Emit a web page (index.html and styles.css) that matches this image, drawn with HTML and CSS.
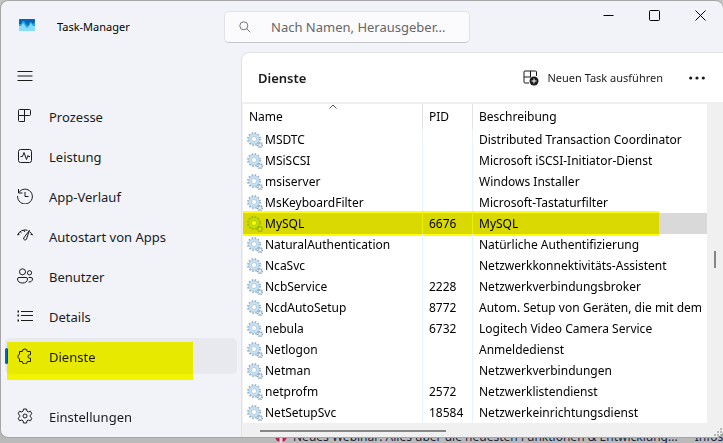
FILE: index.html
```html
<!DOCTYPE html>
<html lang="de">
  <head>
    <meta charset="utf-8">
    <title>Task-Manager</title>
    <link rel="stylesheet" href="styles.css">
  </head>
  <body>
    <!-- shared icons -->
    <svg class="sprite" width="0" height="0">
      <symbol id="service" viewBox="0 0 16 16">
        <circle cx="7" cy="7" r="6" fill="none" stroke="#9db3c6" stroke-width="2" stroke-dasharray="1.6 1.54" />
        <circle cx="7" cy="7" r="4" fill="none" stroke="#c6e3f5" stroke-width="2.6" />
        <circle cx="7" cy="7" r="5.2" fill="none" stroke="#98b8d0" stroke-width=".5" />
        <circle cx="7" cy="7" r="2.600" fill="#fff" stroke="#8badc8" stroke-width=".6" />
        <circle cx="13" cy="13" r="2.4" fill="none" stroke="#8ea6b8" stroke-width="1.6" stroke-dasharray="1.1 .78" />
        <circle cx="13" cy="13" r="1.5" fill="#fff" stroke="#a9c6da" stroke-width="1.1" />
      </symbol>
    </svg>

    <div class="window">
      <header class="titlebar">
        <svg class="logo" width="16" height="12" viewBox="0 0 16 12">
          <rect width="16" height="12" rx=".6" fill="#0863b4" />
          <path d="M0 5h2l2-3 1 0 2 3 2 2 2-4h1l2 2 2-2v9H0z" fill="#25a5e8" />
          <path d="M0 7h2l2-3 1 1 2 3 1 1 2-2 2-3 1 2 1 1h2v5H0z" fill="#86dcff" />
        </svg>
        <span class="app-name">Task-Manager</span>
        <label class="search">
          <svg width="12" height="12" viewBox="0 0 12 12"><circle cx="4.8" cy="4.8" r="4" /><path d="M7.8 7.8l3.5 3.5" /></svg>
          <input type="text" aria-label="Suchen" placeholder="Nach Namen, Herausgeber...">
        </label>
        <div class="controls">
          <button aria-label="Minimieren"><svg width="11" height="11" viewBox="0 0 11 11"><path d="M.5 5.5h10" /></svg></button>
          <button aria-label="Maximieren"><svg width="11" height="11" viewBox="0 0 11 11"><rect x=".5" y=".5" width="10" height="10" rx="1" /></svg></button>
          <button aria-label="Schließen"><svg width="11" height="11" viewBox="0 0 11 11"><path d="M.5.5l10 10M10.5.5l-10 10" /></svg></button>
        </div>
      </header>

      <nav class="sidebar">
        <button class="nav-item" aria-label="Navigation">
          <svg viewBox="0 0 16 16"><path d="M.5 3.500h15M.5 8h15M.5 12.500h15" /></svg>
        </button>
        <button class="nav-item">
          <svg viewBox="0 0 16 16"><path d="M2.500 1.500h10a1 1 0 0 1 1 1v4a1 1 0 0 1-1 1h-11v-5a1 1 0 0 1 1-1zM1.500 7.500v5a1 1 0 0 0 1 1h5v-12" /></svg>
          <span>Prozesse</span>
        </button>
        <button class="nav-item">
          <svg viewBox="0 0 16 16"><rect x="1.500" y="1.500" width="13" height="13" rx="2" /><path d="M3.500 8.500h2l1.500-4 2.500 7 1.500-4 .5 1h1.500" /></svg>
          <span>Leistung</span>
        </button>
        <button class="nav-item">
          <svg viewBox="0 0 16 16"><path d="M1.500 1v4h4M1.600 4.800A7.400 7.400 0 1 1 .6 8M8 4v4.500h3.500" /></svg>
          <span>App-Verlauf</span>
        </button>
        <button class="nav-item">
          <svg viewBox="0 0 16 16"><path d="M.6 7A8 8 0 0 1 10.500 2.300M.6 7l2-.9M13 4a8 8 0 0 1 2.500 3l-2-.9M3 3.500l1.500 1.300M6.800 2l.8 2M12.500 2.300 9.500 11a1.400 1.400 0 0 1-2.800-1l5.800-7.700z" /></svg>
          <span>Autostart von Apps</span>
        </button>
        <button class="nav-item">
          <svg viewBox="0 0 16 16"><circle cx="5.500" cy="3.800" r="3" /><circle cx="12.500" cy="4.800" r="2.100" /><path d="M2 9.500h7a1.500 1.500 0 0 1 1.500 1.500c0 2.500-2 4-5 4s-5-1.500-5-4A1.500 1.500 0 0 1 2 9.500zM11.500 9.500h2.500a1.500 1.500 0 0 1 1.500 1.500c0 2-1.500 3-4 3" /></svg>
          <span>Benutzer</span>
        </button>
        <button class="nav-item">
          <svg viewBox="0 0 16 16"><path d="M4 3.500h12M4 7.500h12M4 12.500h12" /><path d="M.5 3.500H2M.5 7.500H2M.5 12.500H2" stroke-width="1.800" /></svg>
          <span>Details</span>
        </button>
        <button class="nav-item active">
          <svg viewBox="0 0 16 16"><path d="M2.500 3.500h2.800a2.500 2.500 0 0 1 5 0h3.200v3.300h-.8a1.700 1.700 0 0 0 0 3.400h.8v3.300h-3.200a2.500 2.500 0 0 1-5 0H2.500v-2.800a2.300 2.300 0 0 1 0-4.400z" stroke-linejoin="round" /></svg>
          <span>Dienste</span>
        </button>
        <button class="nav-item settings">
          <svg viewBox="0 0 16 16"><circle cx="8" cy="8" r="2" /><path d="M6.500 1h3l.5 2.200 1.300.8 2.200-.8 1.400 2.600L13.200 7.300v1.400l1.700 1.500-1.400 2.600-2.200-.8-1.300.8-.5 2.200h-3L6 12.800 4.700 12l-2.200.8-1.400-2.600 1.700-1.500V7.300L1.100 5.800l1.400-2.600 2.200.8L6 3.200z" stroke-linejoin="round" /></svg>
          <span>Einstellungen</span>
        </button>
      </nav>

      <main class="panel">
        <div class="panel-header">
          <h1>Dienste</h1>
          <button class="new-task">
            <svg width="16" height="16" viewBox="0 0 16 16">
              <path d="M13.500 6V2a1 1 0 0 0-1-1H2a1 1 0 0 0-1 1v10a1 1 0 0 0 1 1h4M1 7h7M7.500 1v6" />
              <circle cx="11" cy="11" r="4.500" fill="#1b1b1b" stroke="none" />
              <path d="M11 8.500v5M8.500 11h5" stroke="#fff" />
            </svg>
            <span>Neuen Task ausführen</span>
          </button>
          <button class="more" aria-label="Weitere Optionen">
            <svg width="16" height="4" viewBox="0 0 16 4"><circle cx="1.700" cy="2" r="1.600" /><circle cx="8" cy="2" r="1.600" /><circle cx="14.300" cy="2" r="1.600" /></svg>
          </button>
        </div>

        <div class="list">
          <div class="table-wrap">
            <table>
              <thead>
                <tr>
                  <th class="name">Name<svg class="sort" width="8" height="5" viewBox="0 0 8 5"><path d="M.5 4.500 4 1l3.500 3.500" /></svg></th>
                  <th class="pid">PID</th>
                  <th>Beschreibung</th>
                </tr>
              </thead>
              <tbody>
                <tr><td><svg><use href="#service" /></svg>MSDTC</td><td></td><td>Distributed Transaction Coordinator</td></tr>
                <tr><td><svg><use href="#service" /></svg>MSiSCSI</td><td></td><td>Microsoft iSCSI-Initiator-Dienst</td></tr>
                <tr><td><svg><use href="#service" /></svg>msiserver</td><td></td><td>Windows Installer</td></tr>
                <tr><td><svg><use href="#service" /></svg>MsKeyboardFilter</td><td></td><td>Microsoft-Tastaturfilter</td></tr>
                <tr class="selected"><td><svg><use href="#service" /></svg>MySQL</td><td>6676</td><td>MySQL</td></tr>
                <tr><td><svg><use href="#service" /></svg>NaturalAuthentication</td><td></td><td>Natürliche Authentifizierung</td></tr>
                <tr><td><svg><use href="#service" /></svg>NcaSvc</td><td></td><td>Netzwerkkonnektivitäts-Assistent</td></tr>
                <tr><td><svg><use href="#service" /></svg>NcbService</td><td>2228</td><td>Netzwerkverbindungsbroker</td></tr>
                <tr><td><svg><use href="#service" /></svg>NcdAutoSetup</td><td>8772</td><td>Autom. Setup von Geräten, die mit dem</td></tr>
                <tr><td><svg><use href="#service" /></svg>nebula</td><td>6732</td><td>Logitech Video Camera Service</td></tr>
                <tr><td><svg><use href="#service" /></svg>Netlogon</td><td></td><td>Anmeldedienst</td></tr>
                <tr><td><svg><use href="#service" /></svg>Netman</td><td></td><td>Netzwerkverbindungen</td></tr>
                <tr><td><svg><use href="#service" /></svg>netprofm</td><td>2572</td><td>Netzwerklistendienst</td></tr>
                <tr><td><svg><use href="#service" /></svg>NetSetupSvc</td><td>18584</td><td>Netzwerkeinrichtungsdienst</td></tr>
              </tbody>
            </table>
          </div>
          <div class="scroll-y"><div class="thumb"></div></div>
          <div class="scroll-x"><div class="thumb"></div></div>
          <svg class="grip" width="10" height="10" viewBox="0 0 10 10"><path d="M7 1h2M4 4h2M7 4h2M1 7h2M4 7h2M7 7h2" /></svg>
        </div>
      </main>
    </div>

    <!-- page behind the window -->
    <div class="behind">
      <svg width="14" height="14" viewBox="0 0 14 14"><circle cx="7" cy="7" r="6" fill="#b81e55" /><path d="M7 7v7" stroke="#ddd" stroke-width="3" /></svg>
      <span>Neues Webinar: Alles über die neuesten Funktionen &amp; Entwicklung...</span>
      <span class="infos">Infos</span>
    </div>
  </body>
</html>
```
FILE: styles.css
```css
* {
  box-sizing: border-box;
}
body {
  margin: 0;
  height: 100vh;
  display: flex;
  flex-direction: column;
  overflow: hidden;
  font-family: "Noto Sans", "Open Sans", sans-serif;
  font-size: 13px;
  color: #1b1b1b;
  background: linear-gradient(#c4c4c4 36px, #1f6db5 36px, #1f6db5 61px, #b9b9b9 61px);
}
button {
  font: inherit;
  color: inherit;
  background: none;
  border: none;
  padding: 0;
}
svg {
  flex: none;
  fill: none;
  stroke: #1b1b1b;
}
.sprite {
  position: absolute;
}
.window {
  flex: 1;
  min-height: 0;
  display: grid;
  grid-template-columns: 240px 1fr;
  grid-template-rows: 51px 1fr;
  background: #f1f3f9;
  border: 1px solid #a6a6a8;
  border-right: none;
  border-radius: 8px;
  overflow: hidden;
  z-index: 1;
}

/* title bar */
.titlebar {
  grid-column: 1 / 3;
  display: flex;
  align-items: center;
  padding-left: 18px;
}
.logo {
  stroke: none;
  margin-bottom: 4px;
}
.app-name {
  width: 189px;
  padding-left: 22px;
  font-size: 11px;
  color: #000;
}
.search {
  display: flex;
  align-items: center;
  width: 246px;
  height: 32px;
  padding-left: 14px;
  background: #fbfbfd;
  border: 1px solid #e1e2e8;
  border-bottom-color: #c4c5ca;
  border-radius: 5px;
}
.search svg {
  stroke: #757575;
}
.search input {
  flex: 1;
  min-width: 0;
  padding: 0 0 0 20px;
  border: none;
  outline: none;
  background: none;
  font: inherit;
}
.search input::placeholder {
  color: #666;
}
.controls {
  display: flex;
  align-self: flex-start;
  margin-left: auto;
}
.controls button {
  width: 46px;
  height: 28px;
}
.controls svg {
  display: block;
  margin: auto;
  stroke: #000;
}

/* sidebar */
.sidebar {
  display: flex;
  flex-direction: column;
  gap: 4px;
  padding: 6px 4px 4px;
}
.nav-item {
  display: flex;
  align-items: center;
  gap: 16px;
  height: 36px;
  padding-left: 12px;
  border-radius: 5px;
  text-align: left;
}
.nav-item svg {
  width: 16px;
  height: 16px;
}
.nav-item span {
  padding-top: 2px;
}
.nav-item.active {
  position: relative;
  background: #e8e9ee;
}
.nav-item.active::before {
  content: "";
  position: absolute;
  left: 0;
  top: 10px;
  width: 3px;
  height: 16px;
  border-radius: 2px;
  background: #0067c0;
}
.settings {
  margin-top: auto;
}

/* yellow marker strokes */
.nav-item.active::after,
.selected td:first-child::after {
  content: "";
  position: absolute;
  background: #ff0;
  mix-blend-mode: multiply;
}
.nav-item.active::after {
  left: 2px;
  top: 4px;
  width: 186px;
  height: 38px;
}
.selected td:first-child::after {
  left: 0;
  top: -2px;
  width: 416px;
  height: 25px;
}

/* content panel */
.panel {
  min-width: 0;
  display: flex;
  flex-direction: column;
  background: #fff;
  border: 1px solid #e2e3e9;
  border-width: 1px 0 0 1px;
  border-top-left-radius: 8px;
}
.panel-header {
  display: flex;
  align-items: center;
  height: 51px;
  padding: 0 18px 0 16px;
  border-bottom: 2px solid #efefef;
}
h1 {
  margin: 0;
  font-size: 13px;
  font-weight: 600;
}
.new-task {
  display: flex;
  align-items: center;
  gap: 8px;
  margin-left: auto;
  font-size: 11px;
}
.more {
  display: flex;
  margin-left: 26px;
}
.more svg {
  fill: #1b1b1b;
  stroke: none;
}
.list {
  position: relative;
  flex: 1;
  min-height: 0;
  display: grid;
  grid-template-columns: minmax(0, 1fr) 16px;
  grid-template-rows: minmax(0, 1fr) 15px;
  padding-left: 1px;
  background: #f0f0f0;
}
.table-wrap {
  overflow: hidden;
  background: #fff;
}
table {
  width: 100%;
  table-layout: fixed;
  border-collapse: separate;
  border-spacing: 0;
  font-size: 12px;
  color: #000;
}
th {
  position: relative;
  height: 25px;
  padding: 0 6px;
  border-right: 1px solid #e2e2e2;
  font-weight: 400;
  text-align: left;
}
th.name {
  width: 180px;
}
th.pid {
  width: 50px;
}
.sort {
  position: absolute;
  left: calc(50% - 4px);
  top: 0;
  stroke: #555;
}
tbody tr {
  position: relative;
}
td {
  height: 21px;
  padding: 0 6px;
  line-height: 16px;
  border-right: 1px solid #e8f1fc;
  white-space: nowrap;
  overflow: hidden;
}
td:first-child {
  padding-left: 4px;
}
td:last-child {
  padding-right: 0;
}
th:last-child,
td:last-child {
  border-right: none;
}
td svg {
  width: 16px;
  height: 16px;
  margin-right: 2px;
  vertical-align: top;
  stroke: none;
}
.selected td {
  overflow: visible;
  background: #d9d9d9;
}
.scroll-y .thumb {
  width: 2px;
  height: 17px;
  margin: 147px auto 0;
  background: #868686;
}
.scroll-x .thumb {
  width: 40%;
  height: 2px;
  margin: 7px 0 0 17px;
  background: #868686;
}
.grip {
  position: absolute;
  right: 0;
  bottom: 0;
  stroke: #b8b8b8;
  stroke-width: 2;
}

/* background page */
.behind {
  display: flex;
  align-items: flex-end;
  height: 5px;
  padding-left: 274px;
  gap: 5px;
  font-size: 12px;
  line-height: 12px;
  white-space: nowrap;
  background: #bababa;
  color: #22223a;
}
.behind svg {
  stroke: none;
}
.infos {
  margin-left: 12px;
}
```
